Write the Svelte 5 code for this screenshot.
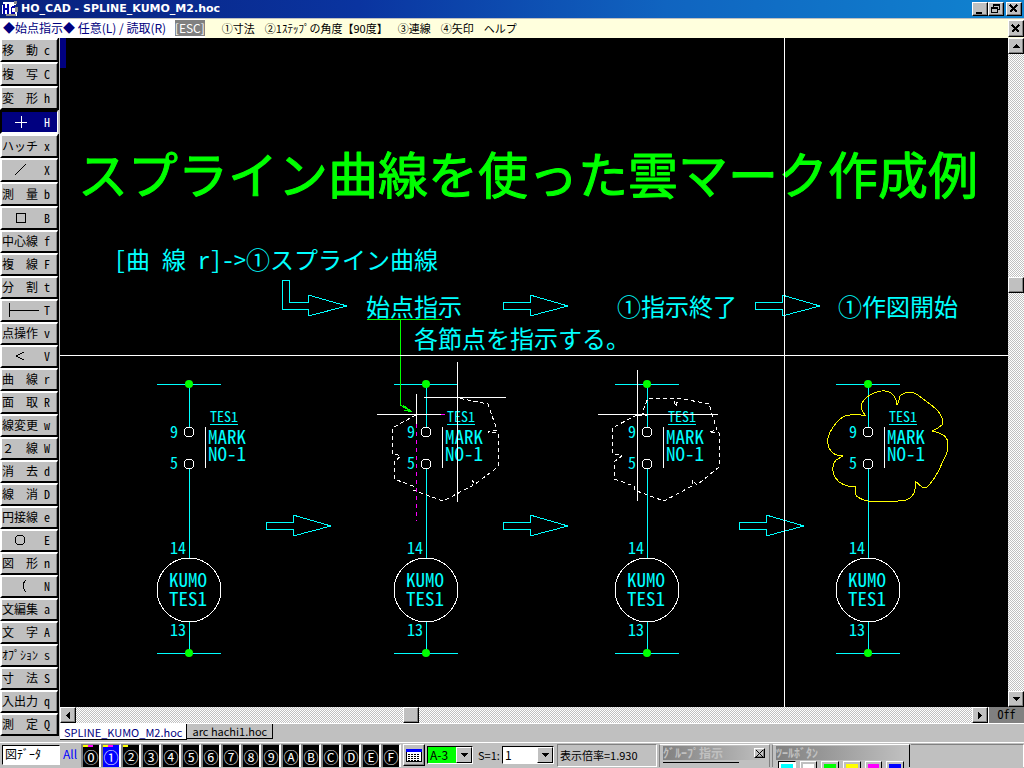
<script>
  let active = $state("H");
  let layer = $state(1);
  let dataName = $state("図ﾃﾞｰﾀ");
  let paper = $state("A-3");
  let scale = $state("1");

  const tools = [
    ["移　動", "c"],
    ["複　写", "C"],
    ["変　形", "h"],
    ["＋", "H", "plus"],
    ["ハッチ", "x"],
    ["／", "X", "slash"],
    ["測　量", "b"],
    ["□", "B", "box"],
    ["中心線", "f"],
    ["複　線", "F"],
    ["分　割", "t"],
    ["├──", "T", "tee"],
    ["点操作", "v"],
    ["＜", "V", "angle"],
    ["曲　線", "r"],
    ["面　取", "R"],
    ["線変更", "w"],
    ["２　線", "W"],
    ["消　去", "d"],
    ["線　消", "D"],
    ["円接線", "e"],
    ["○", "E", "circle"],
    ["図　形", "n"],
    ["（", "N", "arc"],
    ["文編集", "a"],
    ["文　字", "A"],
    ["ｵﾌﾟｼｮﾝ", "s"],
    ["寸　法", "S"],
    ["入出力", "q"],
    ["測　定", "Q"]
  ];

  const icons = {
    plus: "M15 10h12M21 4v12",
    slash: "M15 15L26 4",
    box: "M16 5h9v9h-9z",
    tee: "M9 3v14M9 10h30",
    angle: "M24 6l-8 4l8 4",
    circle: "M15 10a5 5 0 1 0 10 0a5 5 0 1 0 -10 0",
    arc: "M26 4q-6 6 0 12"
  };

  const menu = ["①寸法", "②1ｽﾃｯﾌﾟの角度【90度】", "③連線", "④矢印", "ヘルプ"];
  const layers = ["⓪", "①", "②", "③", "④", "⑤", "⑥", "⑦", "⑧", "⑨", "Ⓐ", "Ⓑ", "Ⓒ", "Ⓓ", "Ⓔ", "Ⓕ"];
  const colors = ["#00ffff", "#ffffff", "#00ff00", "#ffff00", "#ff00ff", "#0000ff"];

  const circuits = [189, 426, 647, 868];
  const arrows = [
    [503, 306],
    [755, 306],
    [266, 526],
    [503, 526],
    [739, 526]
  ];
</script>

{#snippet arrow(x, y)}
  <path class="cyan" d="M{x} {y - 4}h27v-7l38 11l-38 10v-7h-27z" />
{/snippet}

{#snippet circuit(x)}
  <path class="cyan" d="M{x - 32} 384H{x + 32}M{x} 384V427M{x} 469V558M{x} 622V653M{x - 32} 653H{x + 32}M{x + 21} 424h28" />
  <path class="white" d="M{x + 16} 427v41" />
  <circle class="dot" cx={x} cy="384" r="4" />
  <circle class="dot" cx={x} cy="653" r="4" />
  <circle class="white" cx={x} cy="432" r="5" />
  <circle class="white" cx={x} cy="464" r="5" />
  <circle class="white" cx={x} cy="590" r="32" />
  <text class="num" x={x - 19} y="438">9</text>
  <text class="num" x={x - 19} y="469">5</text>
  <text class="num" x={x - 19} y="554">14</text>
  <text class="num" x={x - 19} y="636">13</text>
  <text class="small" x={x + 21} y="422">TES1</text>
  <text class="label" x={x + 19} y="444">MARK</text>
  <text class="label" x={x + 19} y="461">NO-1</text>
  <text class="label" x={x - 20} y="587">KUMO</text>
  <text class="label" x={x - 20} y="606">TES1</text>
{/snippet}

<div class="app">
  <header class="title">
    <svg width="16" height="16" viewBox="0 0 16 16" aria-hidden="true">
      <path fill="#fff" d="M1 1h13v3h-2v2h3v9H5v-2H0V4h1z" />
      <path fill="#888" d="M12 0h3v3h-3zM13 6h3v5h-3zM4 13h10v2H4z" />
      <path fill="#00a" d="M1 3h2v4h2V3h2v10H5V9H3v4H1zM10 5h3v2h-3v4h3v2h-4V6z" />
    </svg>
    <h1>HO_CAD - SPLINE_KUMO_M2.hoc</h1>
    <button class="win" aria-label="最小化">
      <svg width="12" height="10"><path d="M2 8h6v2H2z" /></svg>
    </button>
    <button class="win" aria-label="元に戻す">
      <svg width="12" height="10"><path fill-rule="evenodd" d="M3 0h7v6H8V9H1V3h2zM4 2v1h4v2h1V2zM2 5v3h5V5z" /></svg>
    </button>
    <button class="win last" aria-label="閉じる">
      <svg width="12" height="10"><path class="cross" d="M2 1l7 7M9 1l-7 7" /></svg>
    </button>
  </header>

  <nav class="menu">
    <p>◆始点指示◆ 任意(L) / 読取(R) <kbd>[ESC]</kbd></p>
    {#each menu as item}
      <button>{item}</button>
    {/each}
    <button class="win close" aria-label="図面を閉じる">
      <svg width="12" height="10"><path class="cross" d="M2 1l7 7M9 1l-7 7" /></svg>
    </button>
  </nav>

  <main>
    <aside>
      {#each tools as [name, key, icon]}
        <button class="tool" class:active={active == key} aria-label="{name} {key}" onclick={() => (active = key)}>
          {#if icon}
            <svg width="42" height="20" aria-hidden="true"><path d={icons[icon]} /></svg>
          {:else}
            <span>{name}</span>
          {/if}
          <b>{key}</b>
        </button>
      {/each}
    </aside>

    <section>
      <div class="view">
        <svg class="canvas" width="100%" height="100%">
          <g transform="translate(-60 -38)">
            <path fill="#000080" d="M60 38h6v30h-6z" />
            <text class="headline" x="78" y="194">スプライン曲線を使った雲マーク作成例</text>

            <text class="step" x="114" y="269">[曲 線 r]-&gt;①スプライン曲線</text>
            <text class="step" x="366" y="316">始点指示</text>
            <text class="step" x="617" y="316">①指示終了</text>
            <text class="step" x="838" y="316">①作図開始</text>
            <text class="step" x="414" y="348">各節点を指示する。</text>
            <path class="cyan" d="M282 280h7v22h19v-7l39 11l-39 10v-7h-26z" />
            {#each arrows as [x, y]}
              {@render arrow(x, y)}
            {/each}

            {#each circuits as x}
              {@render circuit(x)}
            {/each}

            <!-- start point -->
            <path class="green" d="M367 319h75M400 319v86l12 7M403 405l9 7l-8 -2M406 407l2 4" />
            <path class="white" d="M377 414h64M416 394v30M424 397h82M457 362v140" />
            <path class="magenta" d="M441 414h7M416 424v97" />
            <path
              class="dash"
              d="M416 415L392 428V453L401 456L394 462V479L413 486V490L443 501L472 486V480L475 484L498 467V433L488 432L497 430L488 404L458 398" />

            <!-- all nodes -->
            <path class="white" d="M637 370v131M598 414h120" />
            <path
              class="dash"
              d="M637 415L612 428V453L622 456L614 462V479L634 486V490L664 501L692 486V480L697 485L719 467V433L709 432L717 430L709 404L678 398L676 407L673 398H648L642 413L645 415H637" />

            <!-- finished cloud -->
            <path
              class="yellow"
              d="M865 415Q858 407 864 400C872 391 888 387 894 396Q897 400 897 405Q899 402 900 396C905 391 914 391 919 396Q932 405 938 411Q943 417 943 424Q938 429 932 431C943 433 948 438 948 444Q948 452 944 459L938 472Q931 484 927 487H922L915 481V489Q914 497 906 500Q902 501 898 501H868Q858 499 855 494V486H848Q838 484 834 475Q831 466 836 460L843 456Q833 456 829 448Q825 439 833 427Q842 414 852 415Q858 413 861 415Z" />
          </g>
          <path class="white" d="M0 317H2000M724 0V2000" />
        </svg>
        <div class="bar vertical">
          <button class="win" aria-label="上へ"><svg width="7" height="4"><path d="M3 0h1l3 4H0z" /></svg></button>
          <i class="before"></i>
          <span class="thumb"></span>
          <i class="after"></i>
          <button class="win" aria-label="下へ"><svg width="7" height="4"><path d="M0 0h7l-3 4H3z" /></svg></button>
        </div>
      </div>
      <div class="bottom">
        <div class="bar horizontal">
          <button class="win" aria-label="左へ"><svg width="4" height="7"><path d="M4 0v7L0 4V3z" /></svg></button>
          <i class="before"></i>
          <span class="thumb"></span>
          <i class="after"></i>
          <button class="win" aria-label="右へ"><svg width="4" height="7"><path d="M0 0v7l4-3V3z" /></svg></button>
        </div>
        <span class="off">Off</span>
      </div>
      <div class="tabs">
        <button class="tab current">SPLINE_KUMO_M2.hoc</button>
        <button class="tab">arc hachi1.hoc</button>
      </div>
    </section>
  </main>

  <footer>
    <input class="data" aria-label="図データ" bind:value={dataName} />
    <a href="#all">All</a>
    <div class="layers">
      {#each layers as name, i}
        <button class:on={layer == i} class:yellow-mark={i < 3} class:pink-mark={i < 2} onclick={() => (layer = i)}>{name}</button>
      {/each}
    </div>
    <button class="win table" aria-label="一覧">
      <svg width="16" height="13">
        <path fill="#fff" stroke="#000" d="M.5 .5h15v12h-15z" />
        <path fill="#0000ff" d="M0 0h16v3H0z" />
        <path stroke="#000" stroke-dasharray="2 1" d="M2 5.5h12M2 7.5h12M2 9.5h12M2 11.5h12" />
      </svg>
    </button>
    <div class="combo paper">
      <select aria-label="用紙" bind:value={paper}>
        <option>A-3</option>
        <option>A-4</option>
      </select>
      <span class="drop"><svg width="7" height="4"><path d="M0 0h7l-3 4H3z" /></svg></span>
    </div>
    <label for="scale">S=1:</label>
    <div class="combo scale">
      <select id="scale" bind:value={scale}>
        <option>1</option>
        <option>10</option>
      </select>
      <span class="drop"><svg width="7" height="4"><path d="M0 0h7l-3 4H3z" /></svg></span>
    </div>
    <output>表示倍率=1.930</output>
    <div class="palette group">
      <h2>ｸﾞﾙｰﾌﾟ指示
        <button class="win" aria-label="閉じる"><svg width="7" height="7"><path class="thin" d="M0 0l7 7M7 0l-7 7" /></svg></button>
      </h2>
      <div class="well"></div>
    </div>
    <div class="palette buttons">
      <h2>ﾂｰﾙﾎﾞﾀﾝ</h2>
      <div class="swatches">
        {#each colors as color}
          <button aria-label={color}><i style="background: {color}"></i></button>
        {/each}
      </div>
    </div>
    <div class="rest"></div>
  </footer>
</div>

<style>
  :global(body) {
    margin: 0;
    background: #c0c0c0;
  }
  .app {
    display: flex;
    flex-direction: column;
    min-height: 100vh;
    background: #c0c0c0;
    color: #000;
    font: 12px/16px "Noto Sans CJK JP", sans-serif;
  }
  button,
  input,
  select {
    box-sizing: border-box;
    margin: 0;
    padding: 0;
    border: 0;
    border-radius: 0;
    background: none;
    color: inherit;
    font: inherit;
  }
  svg {
    display: block;
    shape-rendering: crispEdges;
  }

  .win {
    display: flex;
    flex: none;
    align-items: center;
    justify-content: center;
    width: 16px;
    height: 14px;
    border: 1px solid;
    border-color: #fff #000 #000 #fff;
    box-shadow: inset -1px -1px #808080;
    background: #c0c0c0;
  }
  .cross {
    fill: none;
    stroke: #000;
    stroke-width: 2;
  }
  .thin {
    stroke: #000;
  }

  .title {
    display: flex;
    align-items: center;
    box-sizing: border-box;
    height: 19px;
    padding: 0 2px;
    border-bottom: 1px solid #c0c0c0;
    background: linear-gradient(90deg, #08207c, #0a34a0 35%, #1064c0 65%, #1084d0);
  }
  h1 {
    flex: 1;
    margin: 0 0 0 3px;
    color: #fff;
    font: bold 11px/16px "DejaVu Sans", "Noto Sans CJK JP", sans-serif;
  }
  .last {
    margin-left: 2px;
  }

  .menu {
    display: flex;
    align-items: center;
    gap: 10px;
    height: 19px;
    background: #ffffdd;
    font-size: 11px;
    white-space: nowrap;
  }
  .menu p {
    margin: 0 7px 0 0;
    padding-left: 3px;
    background: #fff;
    color: #000080;
    font-size: 12px;
    line-height: 17px;
    padding-bottom: 2px;
  }
  .menu button {
    padding-bottom: 2px;
  }
  kbd {
    display: inline-block;
    margin-left: 6px;
    background: #808080;
    color: #fff;
    font: inherit;
    line-height: 16px;
  }
  .menu .close {
    height: 17px;
    margin-left: auto;
    padding: 0;
  }

  main {
    display: flex;
    flex: 1;
  }
  aside {
    display: flex;
    flex-direction: column;
    width: 59px;
    border-right: 1px solid #c0c0c0;
  }
  .tool {
    display: flex;
    align-items: center;
    height: 23px;
    padding-bottom: 1px;
    border: solid;
    border-width: 2px 1px 2px 2px;
    border-color: #fff #000 #000 #fff;
    box-shadow: inset -1px 0 #808080, 1px 0 #000;
    width: 58px;
    background: #c0c0c0;
    line-height: 18px;
    text-align: left;
  }
  .tool:nth-child(-n + 8) {
    height: 24px;
  }
  .tool span,
  .tool svg {
    flex: none;
    width: 42px;
  }
  .tool svg {
    margin-left: -2px;
    margin-right: 2px;
    fill: none;
    stroke: currentColor;
  }
  .tool b {
    font: 12px/18px "Noto Sans Mono CJK JP", "Liberation Mono", monospace;
  }
  .tool.active {
    border-color: #000 #fff #fff #000;
    box-shadow: none;
    background: #000080;
    color: #fff;
  }

  section {
    display: flex;
    flex: 1;
    flex-direction: column;
    min-width: 0;
  }
  .view {
    display: flex;
    flex: 1;
  }
  .canvas {
    flex: 1;
    min-width: 0;
    height: auto;
    background: #000;
  }
  .canvas path,
  .canvas circle {
    stroke-width: 1;
  }
  .cyan, .white, .green, .magenta, .yellow, .dash {
    fill: none;
  }
  .cyan { stroke: #00ffff; }
  .white { stroke: #fff; }
  .green { stroke: #00ff00; }
  .yellow { stroke: #ffff00; }
  .magenta {
    stroke: #ff00ff;
    stroke-dasharray: 4 4;
  }
  .dash {
    stroke: #fff;
    stroke-dasharray: 4 3;
  }
  .dot {
    fill: #00ff00;
    shape-rendering: geometricPrecision;
  }
  text {
    fill: #00ffff;
    font-family: "Noto Sans Mono CJK JP", "Noto Sans CJK JP", monospace;
    white-space: pre;
  }
  .headline {
    fill: #00ff00;
    stroke: #00ff00;
    stroke-width: 1;
    stroke-linejoin: round;
    font-size: 50px;
  }
  .step {
    font-size: 24px;
  }
  .label {
    font-size: 19px;
  }
  .num {
    font-size: 16px;
    font-weight: 300;
  }
  .small {
    font-size: 14px;
    font-weight: 300;
  }

  .bar {
    display: flex;
    flex: none;
    background: repeating-conic-gradient(#fff 0 25%, #c0c0c0 0 50%) 0 0 / 2px 2px;
  }
  .bar .win,
  .thumb {
    box-sizing: border-box;
    flex: none;
    width: 16px;
    height: 16px;
  }
  .thumb {
    border: 1px solid;
    border-color: #fff #000 #000 #fff;
    box-shadow: inset -1px -1px #808080;
    background: #c0c0c0;
  }
  .vertical {
    flex-direction: column;
  }
  .vertical .before { flex: 223; }
  .vertical .after { flex: 398; }
  .horizontal {
    flex: 1;
  }
  .horizontal .before { flex: 327; }
  .horizontal .after { flex: 554; }
  .bottom {
    display: flex;
    height: 16px;
  }
  .off {
    width: 35px;
    border-left: 1px solid #fff;
    background: #808080;
    font: 12px/14px "Noto Sans Mono CJK JP", "Liberation Mono", monospace;
    text-align: center;
  }
  .tabs {
    display: flex;
    align-items: flex-start;
    height: 18px;
    border-top: 1px solid #fff;
    font-size: 11px;
  }
  .tab {
    height: 15px;
    padding: 0 5px;
    border: solid #000;
    border-width: 0 1px 1px 0;
    line-height: 14px;
  }
  .current {
    height: 16px;
    padding: 0 4px;
    background: #fff;
    color: #000080;
    line-height: 16px;
  }

  footer {
    display: flex;
    box-sizing: border-box;
    height: 26px;
    padding: 1px 0 1px 2px;
    border-top: 1px solid #fff;
    overflow: hidden;
    white-space: nowrap;
  }
  .data {
    width: 58px;
    height: 20px;
    margin-top: 1px;
    padding: 0 0 3px 2px;
    border: 1px solid;
    border-color: #000 #fff #fff #000;
    background: #fff;
  }
  footer a {
    width: 18px;
    margin-left: 3px;
    color: #0000ff;
    line-height: 20px;
    text-decoration: none;
  }
  .layers {
    display: flex;
  }
  .layers button {
    width: 20px;
    border: solid;
    border-width: 1px 2px 0 2px;
    border-color: #808080 #fff #fff #808080;
    background: #000;
    color: #fff;
    font-size: 15px;
    line-height: 21px;
    text-align: center;
  }
  .layers .on {
    background-color: #0000ff;
  }
  .layers .yellow-mark {
    background-image: linear-gradient(#ffff00, #ffff00);
    background-repeat: no-repeat;
    background-size: 5px 2px;
  }
  .layers .pink-mark {
    background-image: linear-gradient(90deg, #ffff00 50%, #ff00ff 50%);
    background-size: 10px 2px;
  }
  .table {
    width: 22px;
    height: 22px;
    margin-left: 2px;
  }
  .combo {
    display: flex;
    box-sizing: border-box;
    height: 18px;
    margin: 2px 0 0 2px;
    border: 1px solid;
    border-color: #000 #fff #fff #000;
    background: #fff;
  }
  .combo select {
    flex: 1;
    min-width: 0;
    padding: 0 0 2px 2px;
    appearance: none;
  }
  .drop {
    display: flex;
    align-items: center;
    justify-content: center;
    width: 14px;
    border: 1px solid;
    border-color: #fff #000 #000 #fff;
    background: #c0c0c0;
  }
  .paper {
    width: 46px;
  }
  .paper select {
    background: #00ff00;
  }
  .scale {
    width: 52px;
  }
  label {
    width: 22px;
    margin-left: 5px;
    font-size: 11px;
    line-height: 22px;
  }
  output {
    box-sizing: border-box;
    width: 100px;
    margin-left: 3px;
    padding-left: 2px;
    border: 1px solid;
    border-color: #808080 #fff #fff #808080;
    font-size: 11px;
    line-height: 20px;
  }
  .palette {
    box-sizing: border-box;
    margin-left: 2px;
    padding: 1px 3px 0;
    border: solid;
    border-width: 1px 1px 0;
    border-color: #fff #808080;
  }
  .group {
    width: 111px;
  }
  .buttons {
    width: 138px;
    border-right-color: #000;
  }
  h2 {
    display: flex;
    justify-content: space-between;
    align-items: center;
    height: 14px;
    margin: 0;
    background: linear-gradient(90deg, #808080, #c0c0c0);
    color: #c0c0c0;
    font: bold 12px/14px "Noto Sans CJK JP", sans-serif;
  }
  h2 .win {
    width: 11px;
    height: 10px;
    margin-right: 1px;
  }
  .well {
    width: 76px;
    height: 4px;
    margin-top: 2px;
    border-top: 1px solid #000;
  }
  .swatches {
    display: flex;
    gap: 4px;
    padding: 1px 2px;
  }
  .swatches button {
    width: 18px;
    height: 8px;
    padding: 2px;
    border: 1px solid;
    border-color: #fff #000 #000 #fff;
  }
  .swatches button:first-child {
    border-color: #000 #fff #fff #000;
    background: #fff;
  }
  .swatches i {
    display: block;
    height: 4px;
  }
  .rest {
    flex: 1;
    margin-left: 1px;
    border-top: 1px solid #808080;
    border-right: 1px solid #fff;
  }
</style>
